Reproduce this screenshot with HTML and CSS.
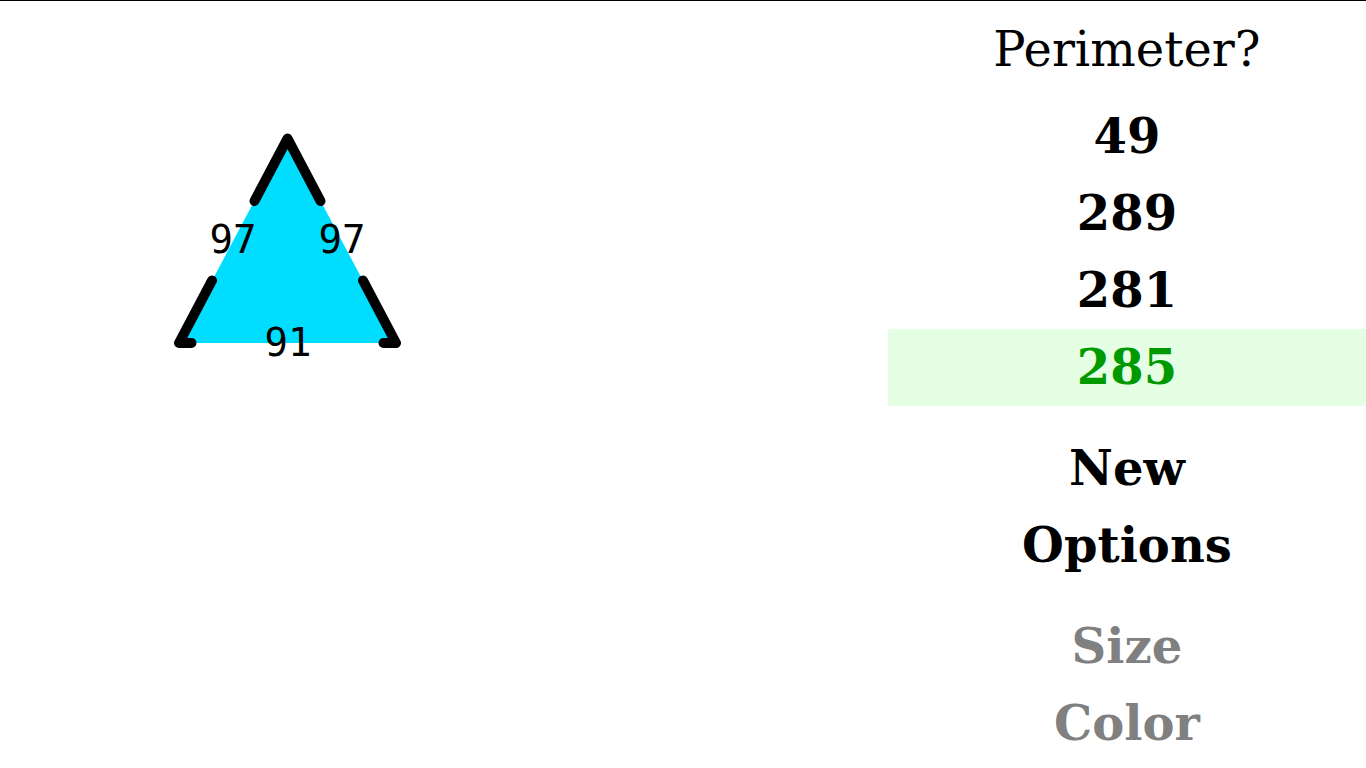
FILE: index.html
```html
<!DOCTYPE html>
<html lang="en">
<head>
<meta charset="utf-8">
<title>Perimeter</title>
<link rel="stylesheet" href="styles.css">
</head>
<body>
<main class="quiz">
  <section class="figure">
    <svg class="shape" width="560" height="400" viewBox="0 0 560 400" role="img" aria-label="Triangle with sides 97, 97 and 91">
      <polygon class="fill" points="287.500,138.500 396,343 179,343"/>
      <path class="edge" d="M254.500 201L287.500 138.500L320.500 201M363 280.500L396 343H383.500M191.500 343H179L212 280.500"/>
      <text class="side" x="233" y="253">97</text>
      <text class="side" x="342" y="253">97</text>
      <text class="side" x="288" y="356">91</text>
    </svg>
  </section>
  <section class="panel">
    <p class="question">Perimeter?</p>
    <div class="group">
      <button class="item" type="button">49</button>
      <button class="item" type="button">289</button>
      <button class="item" type="button">281</button>
      <button class="item correct" type="button">285</button>
    </div>
    <div class="group">
      <button class="item" type="button">New</button>
      <button class="item" type="button">Options</button>
    </div>
    <div class="group">
      <button class="item muted" type="button">Size</button>
      <button class="item muted" type="button">Color</button>
    </div>
  </section>
</main>
</body>
</html>
```
FILE: styles.css
```css
* {
  box-sizing: border-box;
}

body {
  margin: 0;
  background: #fff;
  color: #000;
  font-family: "DejaVu Serif", serif;
}

.quiz {
  display: grid;
  grid-template-columns: 65fr 35fr;
  min-height: 100vh;
  border-top: 1px solid #000;
}

.shape {
  display: block;
  margin-top: -1px;
}

.fill {
  fill: #00ddff;
}

.edge {
  fill: none;
  stroke: #000;
  stroke-width: 10px;
  stroke-linecap: round;
  stroke-linejoin: round;
}

.side {
  font-family: "DejaVu Sans Mono", monospace;
  font-size: 39px;
  text-anchor: middle;
}

.panel {
  display: flex;
  flex-direction: column;
  gap: 24px;
  padding-top: 10px;
}

.question {
  margin: 0 0 -14px;
  font-size: 48px;
  line-height: 77px;
  text-align: center;
}

.group {
  display: flex;
  flex-direction: column;
}

.item {
  padding: 0;
  border: 0;
  background: none;
  color: inherit;
  font: bold 48px/77px "DejaVu Serif", serif;
  text-align: center;
  cursor: pointer;
}

.correct {
  background: #e5ffe5;
  color: #009900;
}

.muted {
  color: #808080;
}
```
